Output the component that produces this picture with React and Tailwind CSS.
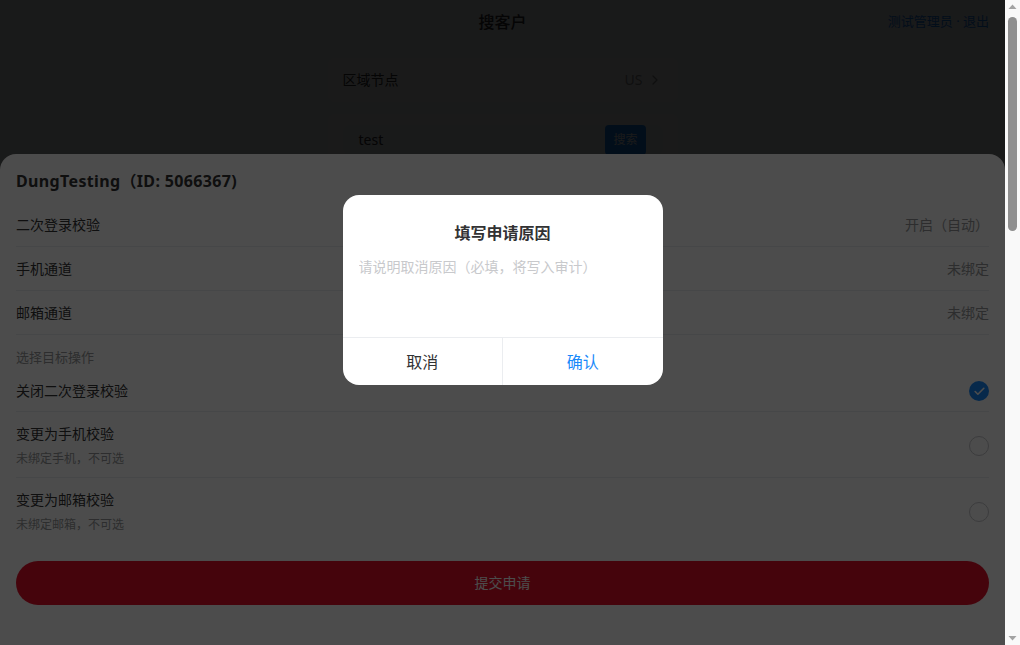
import React, { useState } from 'react';
import { ChevronRight, Check } from 'lucide-react';

const FONT = "font-['Noto_Sans','Noto_Sans_CJK_SC',sans-serif]";

const InfoRow = ({ label, value }) => (
  <div className="h-11 flex items-center justify-between border-b border-[#ebedf0] text-sm">
    <span className="text-[#323233]">{label}</span>
    <span className="text-[#969799]">{value}</span>
  </div>
);

const OptionRow = ({ label, hint, checked, last }) => (
  <div
    className={`flex items-center justify-between ${hint ? 'pt-3 pb-[10px]' : 'pt-[11px] pb-[10px]'} ${
      last ? 'border-b border-transparent' : 'border-b border-[#ebedf0]'
    }`}
  >
    <div>
      <div className="text-sm leading-5 text-[#323233]">{label}</div>
      {hint && <div className="mt-[7px] text-xs leading-4 text-[#969799]">{hint}</div>}
    </div>
    {checked ? (
      <span className="w-5 h-5 rounded-full bg-[#1989fa] flex items-center justify-center">
        <Check size={13} strokeWidth={3} className="text-white" />
      </span>
    ) : (
      <span className="w-5 h-5 rounded-full border border-[#c8c9cc]" />
    )}
  </div>
);

// classic window scrollbar, scrolled to the top
const ScrollBar = () => (
  <div className="w-[15px] shrink-0 bg-[#f9f9f9] flex flex-col items-center">
    <svg width="15" height="15" viewBox="0 0 15 15" className="shrink-0">
      <path d="M3.5 9 L7.5 4.5 L11.5 9 Z" fill="#a3a3a3" />
    </svg>
    <div className="mt-[2px] w-[9px] h-[214px] rounded-full bg-[#8f8f8f]" />
    <div className="flex-1" />
    <svg width="15" height="15" viewBox="0 0 15 15" className="shrink-0">
      <path d="M3.5 6 L7.5 10.5 L11.5 6 Z" fill="#a3a3a3" />
    </svg>
  </div>
);

export default function App() {
  const [reason, setReason] = useState('');

  return (
    <div className={`${FONT} flex h-screen overflow-hidden`}>
      <div className="relative flex-1 overflow-hidden bg-[#f7f8fa]">
        {/* page underneath */}
        <header className="relative h-11 flex items-center justify-center">
          <h1 className="text-base font-medium text-[#323233]">搜客户</h1>
          <div className="absolute right-4 top-0 h-11 flex items-center text-[13px] text-[#1989fa]">
            测试管理员 · 退出
          </div>
        </header>

        <main className="max-w-[350px] mx-auto mt-[14px]">
          <div className="h-11 bg-white rounded-lg px-[15px] flex items-center justify-between text-sm">
            <span className="text-[#323233]">区域节点</span>
            <span className="flex items-center gap-1 text-[#969799]">
              US
              <ChevronRight size={16} />
            </span>
          </div>

          <div className="mt-3 bg-white rounded-lg px-[15px] py-[11px]">
            <div className="flex items-center justify-between bg-[#f7f8fa] rounded-md pl-4 pr-[17px]">
              <span className="text-sm text-[#323233]">test</span>
              <button className="h-[30px] px-2 rounded bg-[#1989fa] text-white text-xs">搜索</button>
            </div>
          </div>
        </main>

        {/* popup layer */}
        <div className="absolute inset-0 bg-black/65" />

        <section className="absolute inset-x-0 bottom-0 bg-white rounded-t-2xl px-4 pt-4 pb-10">
          <h2 className="text-base leading-[22px] font-bold tracking-[0.35px] text-[#323233]">
            DungTesting（ID: 5066367)
          </h2>
          <div className="mt-[11px]">
            <InfoRow label="二次登录校验" value="开启（自动）" />
            <InfoRow label="手机通道" value="未绑定" />
            <InfoRow label="邮箱通道" value="未绑定" />
          </div>
          <div className="pt-[13px] pb-1 text-[13px] leading-[18px] text-[#969799]">选择目标操作</div>
          <OptionRow label="关闭二次登录校验" checked />
          <OptionRow label="变更为手机校验" hint="未绑定手机，不可选" />
          <OptionRow label="变更为邮箱校验" hint="未绑定邮箱，不可选" last />
          <button className="mt-[17px] w-full h-11 rounded-full bg-[#e6102b] text-white text-sm">提交申请</button>
        </section>

        <div className="absolute inset-0 bg-black/70" />

        <div className="absolute top-[45%] left-1/2 -translate-x-1/2 -translate-y-1/2 w-80 bg-white rounded-2xl overflow-hidden">
          <div className="pt-[26px] text-center text-base leading-6 font-semibold text-[#323233]">填写申请原因</div>
          <div className="px-4 pt-3 pb-3">
            <textarea
              value={reason}
              onChange={(e) => setReason(e.target.value)}
              placeholder="请说明取消原因（必填，将写入审计）"
              className="block w-full h-[68px] resize-none outline-none text-sm leading-5 text-[#323233] placeholder:text-[#c8c9cc]"
            />
          </div>
          <div className="flex h-12 border-t border-[#ebedf0]">
            <button className="flex-1 text-base text-[#323233]">取消</button>
            <button className="flex-1 text-base text-[#1989fa] border-l border-[#ebedf0]">确认</button>
          </div>
        </div>
      </div>

      <ScrollBar />
    </div>
  );
}
